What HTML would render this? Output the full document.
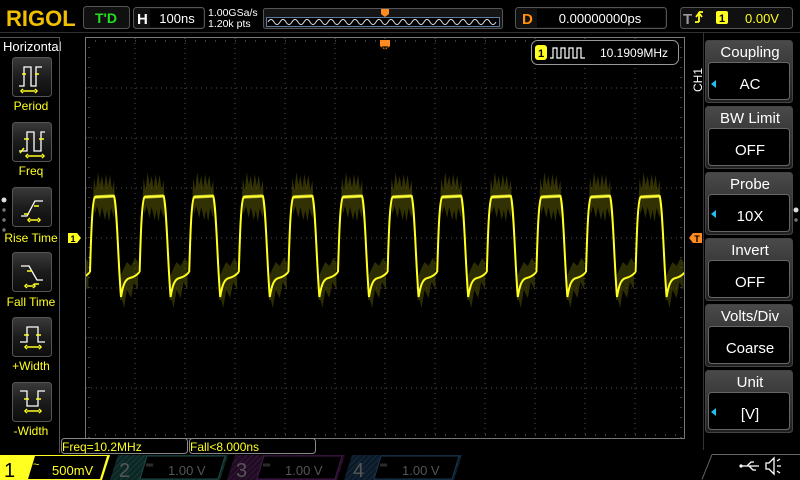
<!DOCTYPE html>
<html><head><meta charset="utf-8"><style>
html,body{margin:0;padding:0;background:#000;width:800px;height:480px;overflow:hidden}
svg{display:block}
text{font-family:"Liberation Sans",sans-serif}
</style></head><body>
<svg width="800" height="480" viewBox="0 0 800 480" xmlns="http://www.w3.org/2000/svg">
<defs>
<linearGradient id="btn" x1="0" y1="0" x2="0" y2="1"><stop offset="0" stop-color="#3a3a3a"/><stop offset="0.5" stop-color="#1c1c1c"/><stop offset="1" stop-color="#0c0c0c"/></linearGradient>
<linearGradient id="hdr" x1="0" y1="0" x2="0" y2="1"><stop offset="0" stop-color="#4a4a4a"/><stop offset="1" stop-color="#202020"/></linearGradient>
<pattern id="hatch2" width="4" height="4" patternUnits="userSpaceOnUse" patternTransform="rotate(45)"><rect width="4" height="4" fill="#0c2624"/><line x1="0" y1="0" x2="0" y2="4" stroke="#18403c" stroke-width="1.5"/></pattern>
<pattern id="hatch3" width="4" height="4" patternUnits="userSpaceOnUse" patternTransform="rotate(45)"><rect width="4" height="4" fill="#200c22"/><line x1="0" y1="0" x2="0" y2="4" stroke="#3a1640" stroke-width="1.5"/></pattern>
<pattern id="hatch4" width="4" height="4" patternUnits="userSpaceOnUse" patternTransform="rotate(45)"><rect width="4" height="4" fill="#0c1a28"/><line x1="0" y1="0" x2="0" y2="4" stroke="#163048" stroke-width="1.5"/></pattern>
<clipPath id="gclip"><rect x="86" y="38" width="598" height="400"/></clipPath>
<g id="per">
<path d="M3,200 L4,178 L6,190 L8,172 L10,185 L12,176 L14,188 L16,174 L18,186 L20,175 L22,190 L24,180 L25,200 L24,218 L21,208 L19,222 L17,210 L15,220 L12,207 L10,218 L7,206 L5,214 Z" fill="#5a5a08" opacity="0.55"/>
<path d="M30,300 L31,275 L34,268 L37,262 L41,266 L45,258 L48,262 L48,290 L44,282 L41,298 L37,290 L34,308 L32,300 Z" fill="#5a5a08" opacity="0.5"/>
<path d="M0,272 C1,240 2,200 5,197 L24,196 C27,205 28,260 31,297 C33,285 35,279 40,278 C44,277 47,275 49.6,272" fill="none" stroke="#ffff20" stroke-width="2"/>
<path d="M5,197 L24,196" stroke="#ffff40" stroke-width="3.5" opacity="0.6"/>
</g>
</defs>

<!-- top bar -->
<text x="6" y="26" font-family="Liberation Serif" font-weight="bold" font-size="22" fill="#f0c000">RIGOL</text>
<rect x="83.5" y="6.5" width="46" height="22" rx="3" fill="#101010" stroke="#555"/>
<text x="106" y="23" text-anchor="middle" font-weight="bold" font-size="14" fill="#20e020">T'D</text>
<rect x="133.5" y="7.5" width="71" height="21" rx="3" fill="#101010" stroke="#555"/>
<text x="137" y="24" font-weight="bold" font-size="15" fill="#fff">H</text>
<rect x="150" y="9" width="53" height="18" fill="#000"/>
<text x="177" y="23" text-anchor="middle" font-size="13" fill="#fff">100ns</text>
<text x="208" y="16" font-size="10.5" fill="#fff">1.00GSa/s</text>
<text x="208" y="27" font-size="10.5" fill="#fff">1.20k pts</text>
<rect x="263.5" y="8.5" width="239" height="20" rx="2" fill="#151515" stroke="#555"/>
<rect x="266.5" y="17.5" width="233" height="9" fill="#000" stroke="#5a7aa0"/>
<path d="M268,22 q3,-5 6,0 t6,0 t6,0 t6,0 t6,0 t6,0 t6,0 t6,0 t6,0 t6,0 t6,0 t6,0 t6,0 t6,0 t6,0 t6,0 t6,0 t6,0 t6,0 t6,0 t6,0 t6,0 t6,0 t6,0 t6,0 t6,0 t6,0 t6,0 t6,0 t6,0 t6,0 t6,0 t6,0 t6,0 t6,0 t6,0 t6,0 t6,0" fill="none" stroke="#ddd" stroke-width="1"/>
<path d="M381,9 h8 v5 l-4,3 l-4,-3z" fill="#ff8a20"/>
<rect x="515.5" y="7.5" width="151" height="21" rx="3" fill="#101010" stroke="#555"/>
<text x="522" y="24" font-weight="bold" font-size="15" fill="#ff9010">D</text>
<rect x="537" y="9" width="128" height="18" fill="#000"/>
<text x="600" y="23" text-anchor="middle" font-size="13" fill="#fff">0.00000000ps</text>
<rect x="680.5" y="7.5" width="112" height="21" rx="3" fill="#101010" stroke="#555"/>
<text x="683" y="24" font-weight="bold" font-size="15" fill="#999">T</text>
<path d="M699,22 v-10 M696,17 l3,-4 l3,4 M695,22 l4,0 M699,12 l4,0" stroke="#ffff20" stroke-width="1.8" fill="none"/>
<rect x="716" y="11" width="12" height="13" rx="2" fill="#ffff20"/>
<text x="722" y="22" text-anchor="middle" font-weight="bold" font-size="11" fill="#000">1</text>
<text x="745" y="23" font-size="13" fill="#ffff20">0.00V</text>
<line x1="0" y1="32.5" x2="800" y2="32.5" stroke="#303030"/>

<!-- left panel -->
<text x="3" y="51" font-size="13" fill="#fff">Horizontal</text>
<line x1="59.5" y1="37" x2="59.5" y2="453" stroke="#555"/>
<line x1="0" y1="37.5" x2="59" y2="37.5" stroke="#555"/>
<g fill="url(#btn)" stroke="#555">
<rect x="12.5" y="57.5" width="39" height="39" rx="3"/>
<rect x="12.5" y="122.5" width="39" height="39" rx="3"/>
<rect x="12.5" y="187.5" width="39" height="39" rx="3"/>
<rect x="12.5" y="252.5" width="39" height="39" rx="3"/>
<rect x="12.5" y="317.5" width="39" height="39" rx="3"/>
<rect x="12.5" y="382.5" width="39" height="39" rx="3"/>
</g>
<g stroke="#fff" stroke-width="1.3" fill="none">
<path d="M19,86 h5 v-19 h7 v19 h5 v-19 h6"/>
<path d="M19,151 h8 v-19 h7 v19 h7 v-19 h4"/>
<path d="M21,216 h6 l8,-15 h8"/>
<path d="M21,266 h8 l8,14 h6"/>
<path d="M20,342 h7 v-15 h11 v15 h7"/>
<path d="M20,391 h7 v15 h11 v-15 h7"/>
</g>
<g stroke="#ffff20" stroke-width="1.5" fill="none">
<path d="M22,74 h4 M35,74 h4 M23,91 h12 M23,89 l-2,2 l2,2 M35,89 l2,2 l-2,2"/>
<path d="M24,139 h5 M39,139 h5 M28,156 h14 M28,154 l-2,2 l2,2 M42,154 l2,2 l-2,2 M20,153 l4,-5"/>
<path d="M34,206 h5 M24,214 h5 M30,220 h8 M30,218 l-2,2 l2,2 M38,218 l2,2 l-2,2"/>
<path d="M27,271 h5 M34,284 h5 M27,286 h6 M27,284 l-2,2 l2,2 M33,284 l2,2 l-2,2"/>
<path d="M24,335 h5 M36,335 h5 M27,347 h12 M27,345 l-2,2 l2,2 M39,345 l2,2 l-2,2"/>
<path d="M24,399 h5 M36,399 h5 M27,411 h12 M27,409 l-2,2 l2,2 M39,409 l2,2 l-2,2"/>
</g>
<g font-size="12" fill="#ffff20" text-anchor="middle">
<text x="31" y="110">Period</text>
<text x="31" y="175">Freq</text>
<text x="31" y="242">Rise Time</text>
<text x="31" y="306">Fall Time</text>
<text x="31" y="370">+Width</text>
<text x="31" y="435">-Width</text>
</g>
<circle cx="4" cy="200" r="2.5" fill="#ddd"/><circle cx="4" cy="210" r="1.7" fill="#777"/><circle cx="4" cy="220" r="1.7" fill="#777"/><circle cx="4" cy="230" r="1.7" fill="#777"/>

<!-- grid -->
<rect x="85.5" y="37.5" width="599" height="401" fill="none" stroke="#777"/>
<g stroke="#555" stroke-width="1" stroke-dasharray="1,4">
<line x1="135" y1="38" x2="135" y2="438"/><line x1="185" y1="38" x2="185" y2="438"/><line x1="235" y1="38" x2="235" y2="438"/><line x1="285" y1="38" x2="285" y2="438"/><line x1="335" y1="38" x2="335" y2="438"/><line x1="385" y1="38" x2="385" y2="438"/><line x1="435" y1="38" x2="435" y2="438"/><line x1="485" y1="38" x2="485" y2="438"/><line x1="535" y1="38" x2="535" y2="438"/><line x1="585" y1="38" x2="585" y2="438"/><line x1="635" y1="38" x2="635" y2="438"/>
<line x1="86" y1="88" x2="684" y2="88"/><line x1="86" y1="138" x2="684" y2="138"/><line x1="86" y1="188" x2="684" y2="188"/><line x1="86" y1="238" x2="684" y2="238"/><line x1="86" y1="288" x2="684" y2="288"/><line x1="86" y1="338" x2="684" y2="338"/><line x1="86" y1="388" x2="684" y2="388"/>
</g>
<g stroke="#777" stroke-width="1" stroke-dasharray="1,9">
<line x1="86" y1="41" x2="684" y2="41" stroke-dashoffset="-9"/>
<line x1="86" y1="435" x2="684" y2="435" stroke-dashoffset="-9"/>
<line x1="89" y1="38" x2="89" y2="438" stroke-dashoffset="-9" />
<line x1="681" y1="38" x2="681" y2="438" stroke-dashoffset="-9"/>
</g>
<g clip-path="url(#gclip)">
<use href="#per" x="40.4"/>
<use href="#per" x="90"/><use href="#per" x="139.6"/><use href="#per" x="189.2"/><use href="#per" x="238.8"/><use href="#per" x="288.4"/><use href="#per" x="338"/><use href="#per" x="387.6"/><use href="#per" x="437.2"/><use href="#per" x="486.8"/><use href="#per" x="536.4"/><use href="#per" x="586"/><use href="#per" x="635.6"/><use href="#per" x="685.2"/>
</g>
<!-- markers -->
<path d="M380,40 h10 v6 l-5,4 l-5,-4z" fill="#ff8a20"/>
<path d="M382,47 h6 M385,47 v7" stroke="#000" stroke-width="1.3"/>
<path d="M68,233 h9 l4,5 l-4,5 h-9z" fill="#ffff20"/>
<text x="73" y="242" text-anchor="middle" font-size="9" font-weight="bold" fill="#000">1</text>
<path d="M702,233 h-9 l-4,5 l4,5 h9z" fill="#ff8a20"/>
<text x="697" y="242" text-anchor="middle" font-size="9" font-weight="bold" fill="#000">T</text>

<!-- freq measure box -->
<rect x="531.5" y="40.5" width="147" height="24" rx="6" fill="#000" stroke="#999"/>
<rect x="535" y="45" width="12" height="15" rx="3" fill="#ffff20"/>
<text x="541" y="57" text-anchor="middle" font-size="11" font-weight="bold" fill="#000">1</text>
<path d="M550,58 h3 v-10 h4 v10 h4 v-10 h4 v10 h4 v-10 h4 v10 h4 v-10 h4 v10 h4" stroke="#fff" fill="none" stroke-width="1.2"/>
<text x="600" y="57" font-size="12" fill="#fff">10.1909MHz</text>

<!-- right panel -->
<line x1="703.5" y1="33" x2="703.5" y2="450" stroke="#333"/>
<text x="702" y="80" transform="rotate(-90 702 80)" text-anchor="middle" font-size="12" fill="#fff">CH1</text>
<g>
<rect x="705.5" y="40.5" width="87" height="62" rx="3" fill="url(#hdr)" stroke="#444"/>
<rect x="708.5" y="62.5" width="81" height="37" rx="3" fill="#000" stroke="#666"/>
<rect x="705.5" y="106.5" width="87" height="62" rx="3" fill="url(#hdr)" stroke="#444"/>
<rect x="708.5" y="128.5" width="81" height="37" rx="3" fill="#000" stroke="#666"/>
<rect x="705.5" y="172.5" width="87" height="62" rx="3" fill="url(#hdr)" stroke="#444"/>
<rect x="708.5" y="194.5" width="81" height="37" rx="3" fill="#000" stroke="#666"/>
<rect x="705.5" y="238.5" width="87" height="62" rx="3" fill="url(#hdr)" stroke="#444"/>
<rect x="708.5" y="260.5" width="81" height="37" rx="3" fill="#000" stroke="#666"/>
<rect x="705.5" y="304.5" width="87" height="62" rx="3" fill="url(#hdr)" stroke="#444"/>
<rect x="708.5" y="326.5" width="81" height="37" rx="3" fill="#000" stroke="#666"/>
<rect x="705.5" y="370.5" width="87" height="62" rx="3" fill="url(#hdr)" stroke="#444"/>
<rect x="708.5" y="392.5" width="81" height="37" rx="3" fill="#000" stroke="#666"/>
</g>
<g font-size="15" fill="#fff" text-anchor="middle">
<text x="750" y="57">Coupling</text><text x="750" y="89">AC</text>
<text x="750" y="123">BW Limit</text><text x="750" y="155">OFF</text>
<text x="750" y="189">Probe</text><text x="750" y="221">10X</text>
<text x="750" y="255">Invert</text><text x="750" y="287">OFF</text>
<text x="750" y="321">Volts/Div</text><text x="750" y="353">Coarse</text>
<text x="750" y="387">Unit</text><text x="750" y="419">[V]</text>
</g>
<g fill="#20c0f0"><path d="M716,80 l-5,4 l5,4z"/><path d="M716,210 l-5,4 l5,4z"/><path d="M716,408 l-5,4 l5,4z"/></g>
<circle cx="796" cy="210" r="2.5" fill="#ddd"/><circle cx="796" cy="220" r="1.7" fill="#777"/>

<!-- measurement strip -->
<rect x="61.5" y="438.5" width="126" height="15" rx="3" fill="#000" stroke="#888"/>
<text x="62" y="451" font-size="12" fill="#ffff20">Freq=10.2MHz</text>
<rect x="189.5" y="438.5" width="126" height="15" rx="3" fill="#000" stroke="#888"/>
<text x="190" y="451" font-size="12" fill="#ffff20">Fall&lt;8.000ns</text>

<!-- bottom channel bar -->
<rect x="0" y="455" width="24" height="25" fill="#ffff20"/>
<text x="4" y="477" font-size="20" fill="#000">1</text>
<path d="M24,455 h86 l-8,25 h-78z" fill="#ffff20"/>
<path d="M35,456 h72 l-7,23 h-72z" fill="#000"/>
<text x="33" y="468" font-size="11" fill="#ffff20">~</text>
<text x="52" y="475" font-size="13" fill="#ffff20">500mV</text>
<path d="M118,455 h110 l-8,25 h-110z" fill="url(#hatch2)"/>
<path d="M147,456 h78 l-7,23 h-78z" fill="#000" stroke="#1c4a46"/>
<text x="119" y="477" font-size="20" fill="#555">2</text>
<text x="146" y="468" font-size="10" fill="#555">═</text>
<text x="168" y="475" font-size="13" fill="#555">1.00 V</text>
<path d="M235,455 h110 l-8,25 h-110z" fill="url(#hatch3)"/>
<path d="M264,456 h78 l-7,23 h-78z" fill="#000" stroke="#40184a"/>
<text x="236" y="477" font-size="20" fill="#555">3</text>
<text x="263" y="468" font-size="10" fill="#555">═</text>
<text x="285" y="475" font-size="13" fill="#555">1.00 V</text>
<path d="M352,455 h110 l-8,25 h-110z" fill="url(#hatch4)"/>
<path d="M381,456 h78 l-7,23 h-78z" fill="#000" stroke="#1a3650"/>
<text x="353" y="477" font-size="20" fill="#555">4</text>
<text x="380" y="468" font-size="10" fill="#555">═</text>
<text x="402" y="475" font-size="13" fill="#555">1.00 V</text>
<path d="M712,454.5 h88 M712,454.5 l-10,25" stroke="#666" fill="none"/>
<g stroke="#fff" stroke-width="1.3" fill="none">
<path d="M741,466 h18 M747,466 l4,-4 h3 M749,466 l4,4 h3"/>
<path d="M766,463 h3 l5,-5 v16 l-5,-5 h-3z M777,461 l3,-2 M777,466 h4 M777,471 l3,2"/>
</g>
<circle cx="741" cy="466" r="1.6" fill="#fff"/>
</svg>
</body></html>
